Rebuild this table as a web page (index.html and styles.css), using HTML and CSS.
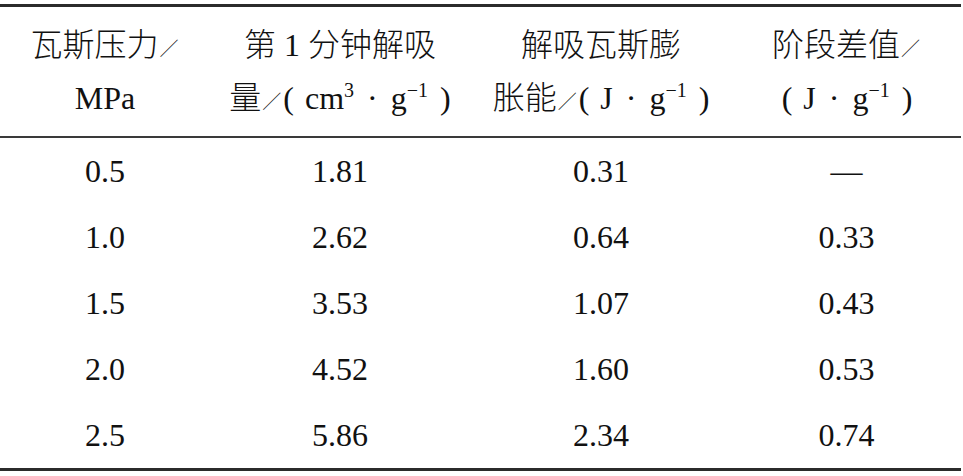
FILE: index.html
```html
<!DOCTYPE html>
<html>
<head>
<meta charset="utf-8">
<title>瓦斯解吸数据表</title>
<link rel="stylesheet" href="styles.css">
</head>
<body>
<table class="data">
  <colgroup>
    <col class="c1"><col class="c2"><col class="c3"><col class="c4">
  </colgroup>
  <thead>
    <tr>
      <th><span class="zh">瓦斯压力</span><span class="sl">／</span><br>MPa</th>
      <th><span class="zh">第</span> 1 <span class="zh">分钟解吸</span><br><span class="zh">量</span><span class="sl">／</span><span class="pl">(</span>cm<sup>3</sup><span class="dot">·</span>g<sup>−1</sup><span class="pr">)</span></th>
      <th><span class="zh">解吸瓦斯膨</span><br><span class="zh">胀能</span><span class="sl">／</span><span class="pl">(</span>J<span class="dot">·</span>g<sup>−1</sup><span class="pr">)</span></th>
      <th><span class="zh">阶段差值</span><span class="sl">／</span><br><span class="pl">(</span>J<span class="dot">·</span>g<sup>−1</sup><span class="pr">)</span></th>
    </tr>
  </thead>
  <tbody>
    <tr><td>0.5</td><td>1.81</td><td>0.31</td><td>—</td></tr>
    <tr><td>1.0</td><td>2.62</td><td>0.64</td><td>0.33</td></tr>
    <tr><td>1.5</td><td>3.53</td><td>1.07</td><td>0.43</td></tr>
    <tr><td>2.0</td><td>4.52</td><td>1.60</td><td>0.53</td></tr>
    <tr><td>2.5</td><td>5.86</td><td>2.34</td><td>0.74</td></tr>
  </tbody>
</table>
</body>
</html>
```
FILE: styles.css
```css
html, body {
  margin: 0;
  padding: 0;
  background: #ffffff;
}

body {
  font-family: "Liberation Serif", "Times New Roman", serif;
  color: #111111;
}

.data {
  margin-top: 4px;
  width: 961px;
  table-layout: fixed;
  border-collapse: collapse;
  border-top: 3px solid #2b2b2b;
  border-bottom: 3px solid #2b2b2b;
}

.c1 { width: 210px; }
.c2 { width: 260px; }
.c3 { width: 262px; }
.c4 { width: 229px; }

.data th {
  font-weight: normal;
  font-size: 32px;
  line-height: 53px;
  padding: 12px 0 11px;
  text-align: center;
  vertical-align: top;
  border-bottom: 2px solid #3a3a3a;
  white-space: nowrap;
}

.data td {
  font-size: 32px;
  height: 66px;
  padding: 0;
  line-height: 66px;
  text-align: center;
}

.zh {
  font-family: "Noto Sans CJK SC", sans-serif;
  font-weight: 200;
  line-height: 0;
}

.sl {
  font-family: "Noto Sans CJK SC", sans-serif;
  font-weight: 200;
  font-size: 19px;
  line-height: 0;
  margin: 0 1px;
}

.pl, .pr {
  line-height: 0;
}

.pl {
  margin-left: 1px;
  margin-right: 11px;
}

.pr {
  margin-left: 12px;
}

.dot {
  line-height: 0;
  margin: 0 13px;
}

sup {
  font-size: 20px;
  line-height: 0;
  vertical-align: 12px;
}
```
